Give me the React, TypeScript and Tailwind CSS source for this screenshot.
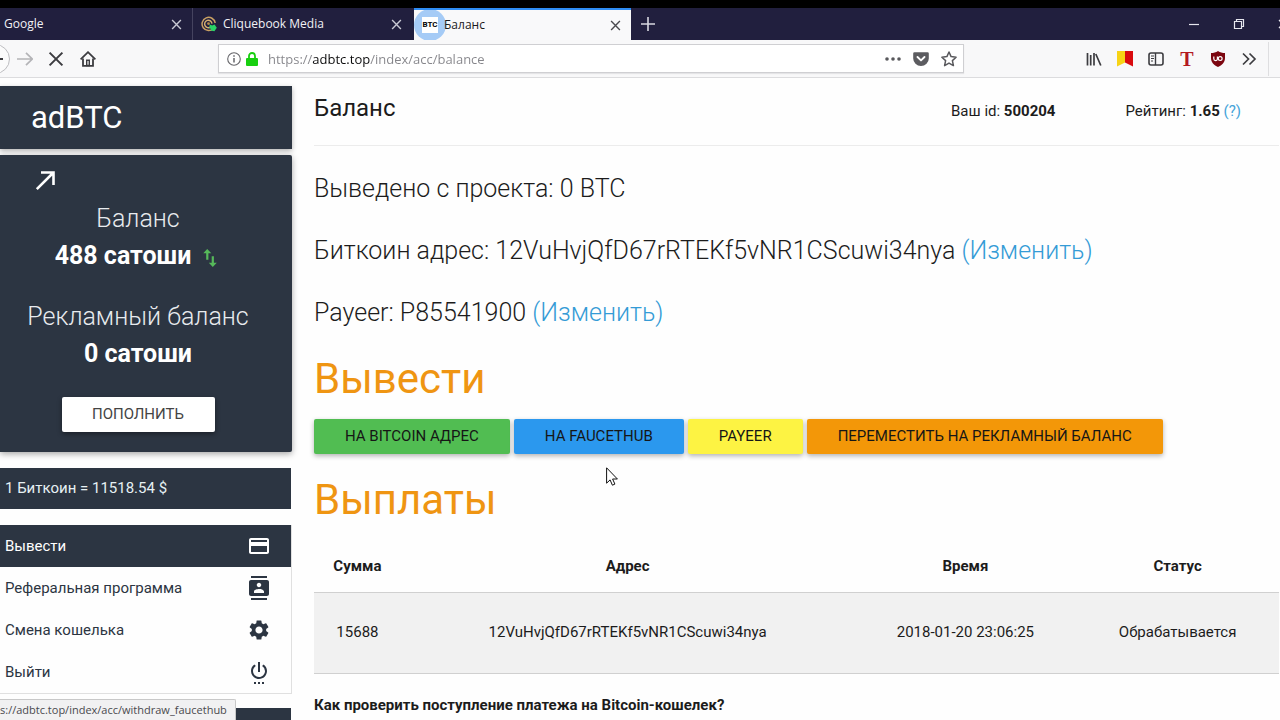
import React from "react";
import { MdContacts, MdCreditCard, MdSettings, MdSettingsPower } from "react-icons/md";

function CloseGlyph({ className }: { className: string }) {
  return (
    <svg viewBox="0 0 12 12" className={className} fill="none" stroke="currentColor" aria-hidden="true">
      <path d="M1.2 1.2 10.8 10.8M10.8 1.2 1.2 10.8" strokeWidth="1.5" />
    </svg>
  );
}

function CliquebookLogo() {
  return (
    <svg viewBox="0 0 16 16" className="size-4 shrink-0" fill="none" aria-hidden="true">
      <path d="M12.6 12.4A6.6 6.6 0 1 1 14.2 7" stroke="#c9a063" strokeWidth="1.5" />
      <path d="M9.6 10.9A3.7 3.7 0 1 1 11 7.6" stroke="#d8b070" strokeWidth="1.4" />
      <circle cx="7.5" cy="7.6" r="1.4" fill="#b98b4a" />
      <path d="m8.2 8.2 3 1.2 2.3-.8 2.3 3.2-2.4 3.4-3.8-.6.4-1.6-2-1 1-1.4z" fill="#2bd467" />
    </svg>
  );
}

function TabStrip() {
  return (
    <div className="flex h-8 shrink-0 items-stretch bg-[#211f3e] text-[12px] text-[#f1f1f5]">
      <div className="flex w-[193px] items-center justify-between border-r border-[#45435f] pr-[10px] pl-1">
        <button type="button">Google</button>
        <button type="button" aria-label="Закрыть вкладку">
          <CloseGlyph className="size-[11px] text-[#c9c9d4]" />
        </button>
      </div>
      <div className="flex w-[221px] items-center justify-between pr-3 pl-2">
        <button type="button" className="flex items-center gap-[6px]">
          <CliquebookLogo />
          Cliquebook Media
        </button>
        <button type="button" aria-label="Закрыть вкладку">
          <CloseGlyph className="size-[11px] text-[#c9c9d4]" />
        </button>
      </div>
      <div className="flex w-[217px] items-center justify-between overflow-hidden border-t-2 border-[#2f8df5] bg-[#f9f9fa] pr-[10px] text-[#1a1a1c]">
        <button type="button" className="flex items-center">
          <span className="-mr-[2px] flex size-8 items-center justify-center rounded-full bg-[#a5cbf6]">
            <span className="flex size-4 items-center justify-center bg-white font-[Roboto,sans-serif] text-[8px] font-bold text-black">
              BTC
            </span>
          </span>
          Баланс
        </button>
        <button type="button" aria-label="Закрыть вкладку">
          <CloseGlyph className="size-[11px] text-[#4a4a4f]" />
        </button>
      </div>
      <button type="button" aria-label="Новая вкладка" className="flex w-[34px] items-center justify-center">
        <svg viewBox="0 0 14 14" className="size-[14px]" stroke="#d8d8e0" strokeWidth="1.6" aria-hidden="true">
          <path d="M7 0v14M0 7h14" />
        </svg>
      </button>
      <div className="ml-auto flex items-center text-[#e6e6ee]">
        <button type="button" aria-label="Свернуть" className="flex w-[45px] justify-center">
          <svg viewBox="0 0 10 10" className="size-[10px]" stroke="currentColor" aria-hidden="true">
            <path d="M0 5.5h10" strokeWidth="1.2" />
          </svg>
        </button>
        <button type="button" aria-label="Восстановить" className="flex w-[45px] justify-center">
          <svg viewBox="0 0 12 12" className="size-3" fill="none" stroke="currentColor" strokeWidth="1.2" aria-hidden="true">
            <path d="M1.5 3.5h7v7h-7zM3.5 3.5v-2h7v7h-2" />
          </svg>
        </button>
        <button type="button" aria-label="Закрыть окно" className="flex w-[19px] justify-end overflow-hidden">
          <CloseGlyph className="-mr-2 size-[10px]" />
        </button>
      </div>
    </div>
  );
}

function Toolbar() {
  return (
    <div className="flex h-[38px] shrink-0 items-center border-b border-[#dcdcde] bg-[#f8f8f9] text-[#3c3c40]">
      <button
        type="button"
        aria-label="Назад"
        className="-ml-5 flex size-[30px] items-center justify-end rounded-full border border-[#bdbdc0] bg-[#fbfbfb]"
      >
        <svg viewBox="0 0 14 14" className="mr-[6px] size-[14px]" fill="none" stroke="currentColor" strokeWidth="2" aria-hidden="true">
          <path d="M14 7H2M7 2 2 7l5 5" />
        </svg>
      </button>
      <button type="button" aria-label="Вперёд" className="ml-[6px] flex w-[18px] justify-center text-[#b4b4b7]">
        <svg viewBox="0 0 16 16" className="size-4" fill="none" stroke="currentColor" strokeWidth="1.7" aria-hidden="true">
          <path d="M0 8h15M9 1.8 15.2 8 9 14.2" />
        </svg>
      </button>
      <button type="button" aria-label="Остановить" className="ml-[14px]">
        <CloseGlyph className="size-4" />
      </button>
      <button type="button" aria-label="Домой" className="ml-4">
        <svg viewBox="0 0 16 16" className="size-4" fill="none" stroke="currentColor" aria-hidden="true">
          <path d="M.6 8.4 8 1.2l7.4 7.2" strokeWidth="1.8" />
          <path d="M3 7.6v7.2h10V7.6" strokeWidth="1.8" />
          <path d="M6.7 14.5V9.2h2.6v5.3z" strokeWidth="1.4" />
        </svg>
      </button>

      <div className="ml-[122px] flex h-[29px] max-w-[746px] flex-1 items-center border border-[#cfcfd2] bg-white pr-[6px] pl-2 shadow-[0_1px_1px_#e4e4e6]">
        <svg viewBox="0 0 14 14" className="size-[14px]" fill="none" stroke="#66666a" aria-hidden="true">
          <circle cx="7" cy="7" r="6.3" strokeWidth="1.1" />
          <path d="M7 6v4.6M7 3.2v1.5" strokeWidth="1.5" />
        </svg>
        <svg viewBox="0 0 12 14" className="ml-[5px] h-[14px] w-3" aria-hidden="true">
          <path d="M3 7V4a3 3 0 0 1 6 0v3" fill="none" stroke="#18cf10" strokeWidth="1.8" />
          <rect x="0" y="6" width="12" height="8" rx="1" fill="#18cf10" />
        </svg>
        <input
          aria-label="Адрес страницы"
          defaultValue="https://adbtc.top/index/acc/balance"
          className="ml-[10px] min-w-0 flex-1 bg-[linear-gradient(90deg,#85858a_0_44px,#0c0c0d_44px_102px,#85858a_102px)] bg-clip-text pt-[2px] text-[13px] text-transparent caret-black outline-none"
        />
        <div className="flex items-center gap-3">
          <button type="button" aria-label="Действия">
            <svg viewBox="0 0 16 16" className="size-4" fill="#58585c" aria-hidden="true">
              <circle cx="2" cy="8" r="1.8" />
              <circle cx="8" cy="8" r="1.8" />
              <circle cx="14" cy="8" r="1.8" />
            </svg>
          </button>
          <button type="button" aria-label="Сохранить в Pocket">
            <svg viewBox="0 0 16 16" className="size-4" aria-hidden="true">
              <path d="M1.5 1.2h13a1.3 1.3 0 0 1 1.3 1.3v5a7.8 7.4 0 0 1-15.6 0v-5a1.3 1.3 0 0 1 1.3-1.3z" fill="#5c5c60" />
              <path d="m4.5 6 3.5 3.4L11.5 6" fill="none" stroke="#fff" strokeWidth="1.9" strokeLinecap="round" strokeLinejoin="round" />
            </svg>
          </button>
          <button type="button" aria-label="Добавить в закладки">
            <svg viewBox="0 0 16 16" className="size-4" fill="none" stroke="#58585c" strokeWidth="1.5" strokeLinejoin="round" aria-hidden="true">
              <path d="m8 1 2.1 4.6 5 .6-3.7 3.4 1 5L8 12.1l-4.4 2.5 1-5L.9 6.2l5-.6z" />
            </svg>
          </button>
        </div>
      </div>

      <div className="ml-auto flex items-center gap-[15px] pr-[11px] pl-4">
        <button type="button" aria-label="Библиотека">
          <svg viewBox="0 0 16 16" className="size-4" fill="none" stroke="currentColor" strokeWidth="1.7" aria-hidden="true">
            <path d="M1.5 2v12.5M4.7 4v10.5M8 2v12.5M9.8 3l5 11.5" />
          </svg>
        </button>
        <button type="button" aria-label="Закладки">
          <svg viewBox="0 0 16 16" className="size-4" aria-hidden="true">
            <path d="M0 0h8v11.5L0 15.5z" fill="#f7d315" />
            <path d="M8 0h8v15.5l-8-4z" fill="#d90a0e" />
          </svg>
        </button>
        <button type="button" aria-label="Боковая панель">
          <svg viewBox="0 0 16 16" className="size-4" fill="none" stroke="currentColor" aria-hidden="true">
            <rect x="1" y="2" width="14" height="12" rx="2" strokeWidth="1.6" />
            <path d="M7.5 2v12" strokeWidth="1.4" />
            <path d="M3 5h3M3 7.5h3M3 10h2" strokeWidth="1" />
          </svg>
        </button>
        <button
          type="button"
          className="w-4 text-center font-['Liberation_Serif',serif] text-[20px] leading-4 font-bold text-[#b3191f]"
        >
          T
        </button>
        <button type="button" aria-label="uBlock">
          <svg viewBox="0 0 16 16" className="size-4" aria-hidden="true">
            <path d="M8 0c2 1.4 4.5 2 7 2v5c0 4.500-3 7-7 9-4-2-7-4.500-7-9V2c2.500 0 5-.6 7-2z" fill="#7c0610" />
            <path d="M3.8 5.500v2.300a1.800 1.800 0 0 0 3.600 0V5.500" fill="none" stroke="#fff" strokeWidth="1.2" />
            <circle cx="10.2" cy="7.6" r="1.9" fill="none" stroke="#fff" strokeWidth="1.2" />
          </svg>
        </button>
        <button type="button" aria-label="Другие инструменты">
          <svg viewBox="0 0 16 16" className="size-4" fill="none" stroke="currentColor" strokeWidth="1.7" aria-hidden="true">
            <path d="m2 2.500 5.500 5.500L2 13.500M8.500 2.500 14 8l-5.500 5.500" />
          </svg>
        </button>
      </div>
      <div className="h-[34px] w-3 border-l border-[#dedee0]" />
    </div>
  );
}

const menu = [
  { label: "Вывести", Icon: MdCreditCard, active: true },
  { label: "Реферальная программа", Icon: MdContacts, active: false },
  { label: "Смена кошелька", Icon: MdSettings, active: false },
  { label: "Выйти", Icon: MdSettingsPower, active: false },
];

function Sidebar() {
  return (
    <aside className="w-[292px] shrink-0">
      <div className="bg-[#2c3542] px-[31px] py-3 shadow-[0_2px_5px_rgba(0,0,0,0.3)]">
        <a href="#home" className="block text-[31px] leading-[39px] text-white">
          adBTC
        </a>
      </div>

      <section className="mt-[6px] flex flex-col rounded-r-xs bg-[#2c3542] pt-3 pr-4 pb-5 text-center text-white shadow-[0_2px_6px_rgba(0,0,0,0.35)]">
        <a href="#withdraw" aria-label="Открыть баланс" className="ml-8 self-start">
          <svg viewBox="0 0 26 26" className="size-[26px]" fill="none" stroke="currentColor" strokeWidth="2.6" aria-hidden="true">
            <path d="M9 5.5h12.500v12.500M21 6 4.800 22.200" />
          </svg>
        </a>
        <h2 className="mt-[7px] text-[25px] leading-[37px] font-light text-[#e8ebee]">Баланс</h2>
        <p className="flex items-center justify-center gap-2 text-[25px] leading-[37px] font-bold">
          488 сатоши
          <a href="#exchange" aria-label="Обменять" className="pt-1 text-[#56b95a]">
            <svg viewBox="0 0 22 22" className="size-[22px]" aria-hidden="true">
              <path
                d="M8.200 2 4.300 6.200h2.900v6.600h2.200V6.200h2.900zM14.900 15.800V9.200h-2.200v6.600H9.800l4 4.200 4-4.200z"
                fill="currentColor"
              />
            </svg>
          </a>
        </p>
        <h2 className="mt-6 text-[25px] leading-[37px] font-light text-[#e8ebee]">Рекламный баланс</h2>
        <p className="text-[25px] leading-[37px] font-bold">0 сатоши</p>
        <button
          type="button"
          className="mt-[25px] h-[35px] w-[153px] self-center rounded-xs bg-white text-[15px] text-[#444] shadow-[0_2px_5px_rgba(0,0,0,0.4)]"
        >
          ПОПОЛНИТЬ
        </button>
      </section>

      <div className="mt-4 mr-px bg-[#2c3542] pl-[5px] text-[15px] leading-[41px] text-[#e6f0f3]">
        1 Биткоин = 11518.54 $
      </div>

      <nav className="mt-4 border-r border-b border-[#e0e0e0] text-[15px]">
        {menu.map(({ label, Icon, active }) => (
          <a
            key={label}
            href="#menu"
            className={
              active
                ? "flex items-center justify-between bg-[#2c3542] pr-5 pl-[5px] leading-[42px] text-white"
                : "flex items-center justify-between pr-5 pl-[5px] leading-[42px] text-[#2c3542]"
            }
          >
            {label}
            <Icon className="size-6" />
          </a>
        ))}
      </nav>

      <div className="mt-[14px] mr-px h-10 bg-[#2c3542]" />
    </aside>
  );
}

const actions = [
  { label: "НА BITCOIN АДРЕС", color: "bg-[#51bd52]" },
  { label: "НА FAUCETHUB", color: "bg-[#2b98ee]" },
  { label: "PAYEER", color: "bg-[#fdf343]" },
  { label: "ПЕРЕМЕСТИТЬ НА РЕКЛАМНЫЙ БАЛАНС", color: "bg-[#f39708]" },
];

function Main() {
  return (
    <main className="min-w-0 flex-1 pr-px pl-[22px] text-[#1c1c1c]">
      <header className="flex items-center justify-between border-b border-[#ececec] pr-[38px] pb-[15px]">
        <h1 className="text-[24px] leading-[44px]">Баланс</h1>
        <div className="flex gap-[70px] pt-[7px] text-[15px]">
          <p>
            Ваш id: <b>500204</b>
          </p>
          <p>
            Рейтинг: <b>1.65</b>{" "}
            <a href="#rating" className="text-[#45a3d9]">
              (?)
            </a>
          </p>
        </div>
      </header>

      <div className="mt-6 flex flex-col gap-6 text-[25px] leading-[38px] font-light">
        <p>Выведено с проекта: 0 BTC</p>
        <p>
          Биткоин адрес: 12VuHvjQfD67rRTEKf5vNR1CScuwi34nya{" "}
          <a href="#wallet" className="text-[#349bd6]">
            (Изменить)
          </a>
        </p>
        <p>
          Payeer: P85541900{" "}
          <a href="#payeer" className="text-[#349bd6]">
            (Изменить)
          </a>
        </p>
      </div>

      <h2 className="mt-[19px] text-[42px] leading-[56px] text-[#ef9512]">Вывести</h2>
      <div className="mt-3 flex gap-1 text-[15px] text-[#161616]">
        {actions.map(({ label, color }) => (
          <button
            key={label}
            type="button"
            className={`h-[35px] rounded-xs px-[31px] shadow-[0_2px_5px_rgba(0,0,0,0.3)] ${color}`}
          >
            {label}
          </button>
        ))}
      </div>

      <h2 className="mt-[18px] text-[42px] leading-[56px] text-[#ef9512]">Выплаты</h2>
      <table className="mt-3 w-full table-fixed text-center text-[15px]">
        <thead>
          <tr className="h-[52px] border-b border-[#d0d0d0]">
            <th className="w-[9%] font-bold">Сумма</th>
            <th className="w-[47%] font-bold">Адрес</th>
            <th className="w-[23%] font-bold">Время</th>
            <th className="w-[21%] font-bold">Статус</th>
          </tr>
        </thead>
        <tbody>
          <tr className="h-[81px] border-b border-[#d0d0d0] bg-[#f1f1f1]">
            <td>15688</td>
            <td>12VuHvjQfD67rRTEKf5vNR1CScuwi34nya</td>
            <td>2018-01-20 23:06:25</td>
            <td>Обрабатывается</td>
          </tr>
        </tbody>
      </table>
      <p className="mt-5 text-[15px] font-bold">Как проверить поступление платежа на Bitcoin-кошелек?</p>
    </main>
  );
}

export default function App() {
  return (
    <div className="relative flex h-screen flex-col overflow-hidden border-t-8 border-black bg-white font-['Open_Sans','Noto_Sans',sans-serif]">
      <TabStrip />
      <Toolbar />
      <div className="flex min-h-0 flex-1 overflow-hidden bg-[#fefefe] pt-2 font-[Roboto,sans-serif]">
        <Sidebar />
        <Main />
      </div>

      <div className="absolute bottom-0 left-0 rounded-tr-xs border-t border-r border-[#c8c8c8] bg-[#f1f1f2] pr-2 text-[11px] leading-5 text-[#4a4a4e]">
        s://adbtc.top/index/acc/withdraw_faucethub
      </div>
      <svg viewBox="0 0 12 19" className="absolute top-[459px] left-[606px] h-[19px] w-3" aria-hidden="true">
        <path
          d="M.6.8v15.400l3.500-3.300 2.300 5.300 2.500-1.100-2.300-5.100h4.800z"
          fill="#fff"
          stroke="#111"
          strokeWidth="1"
        />
      </svg>
    </div>
  );
}
